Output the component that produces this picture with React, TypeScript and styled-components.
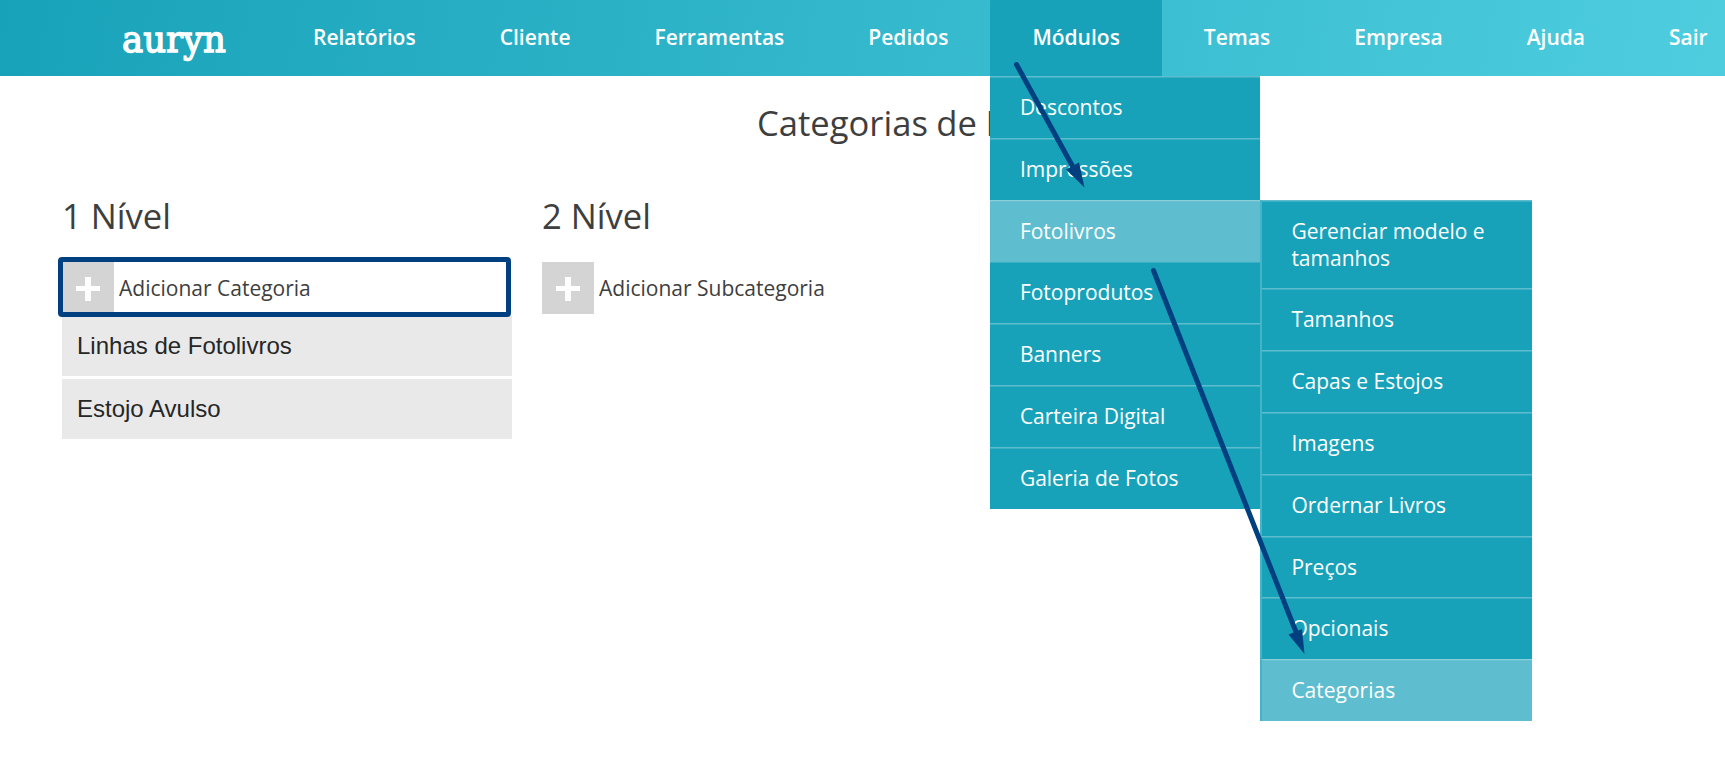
import React from "react";
import styled, { createGlobalStyle } from "styled-components";

const GlobalStyle = createGlobalStyle`
    body {
        margin: 0;
        background: #ffffff;
        color: #3e3e3e;
        font-family: "Open Sans", sans-serif;
        overflow: hidden;
    }
`;

const Page = styled.div`
    position: relative;
    width: 1725px;
    height: 771px;
    overflow: hidden;
`;

const Header = styled.header`
    display: flex;
    height: 76px;
    background: linear-gradient(100deg, #18a2b9 0%, #4ecddf 100%);
`;

const Logo = styled.svg`
    flex: none;
    width: 150px;
    height: 76px;
    margin-left: 121px;
    overflow: visible;
`;

const Nav = styled.nav`
    display: flex;
`;

const NavItem = styled.div<{ $active?: boolean }>`
    position: relative;
    box-sizing: border-box;
    height: 76px;
    padding: 0 42px;
    background: ${(props) => (props.$active ? "#18a2b9" : "transparent")};
`;

const NavLabel = styled.span`
    display: block;
    color: #ffffff;
    font-size: 21px;
    font-weight: 600;
    line-height: 75px;
    white-space: nowrap;
`;

const Menu = styled.div`
    position: absolute;
    z-index: 2;
    top: 76px;
    left: 0;
    width: 270px;
`;

const MenuItem = styled.div<{ $active?: boolean }>`
    position: relative;
    box-sizing: border-box;
    min-height: 61.8px;
    padding: 18px 29.5px 16px;
    background: ${(props) => (props.$active ? "#5ebdce" : "#18a2b9")};
    box-shadow: inset 0 1px ${(props) => (props.$active ? "#8bcfdb" : "#5dbdce")}, inset 0 2px ${(props) => (props.$active ? "#68c1d1" : "#3bb0c3")};
    color: #ffffff;
    font-size: 21px;
    line-height: 27.4px;
`;

const SubMenu = styled.div`
    position: absolute;
    top: 0;
    left: 270px;
    width: 270px;
    border-left: 2px solid #46b4c7;

    ${MenuItem} {
        padding-left: 29px;
    }
`;

const Content = styled.main`
    display: flex;
    flex-direction: column;
    padding: 0 62px;
`;

const Title = styled.h1`
    margin: 23px 0 0 695px;
    font-size: 34.6px;
    font-weight: 400;
    line-height: 48px;
    word-spacing: -0.5px;
    white-space: nowrap;
`;

const Columns = styled.div`
    display: flex;
    gap: 30px;
    margin-top: 45px;
`;

const Column = styled.section`
    width: 450px;
`;

const ColumnTitle = styled.h2`
    margin: 0 0 22px;
    font-size: 34.6px;
    font-weight: 400;
    line-height: 48px;
`;

const AddRow = styled.div`
    position: relative;
    display: flex;
    align-items: center;
    gap: 5px;
    height: 52px;
    margin-bottom: 2px;
    font-size: 21px;
`;

const AddButton = styled.div`
    display: flex;
    align-items: center;
    justify-content: center;
    box-sizing: border-box;
    width: 52px;
    height: 52px;
    padding-top: 2px;
    background: #d4d4d4;
`;

const Highlight = styled.div`
    position: absolute;
    z-index: 1;
    box-sizing: border-box;
    top: -5px;
    left: -4px;
    width: 453px;
    height: 60px;
    border: 5px solid #004080;
    border-radius: 4px;
`;

const Category = styled.div`
    height: 60px;
    margin-bottom: 3px;
    padding-left: 15px;
    background: #e9e9e9;
    color: #262626;
    font-family: "Liberation Sans", Arial, sans-serif;
    font-size: 24px;
    line-height: 60px;
`;

const Arrows = styled.svg`
    position: absolute;
    z-index: 3;
    top: 0;
    left: 0;
    width: 1725px;
    height: 771px;
    pointer-events: none;
`;

const navItems = ["Relatórios", "Cliente", "Ferramentas", "Pedidos", "Módulos", "Temas", "Empresa", "Ajuda", "Sair"];
const modules = ["Descontos", "Impressões", "Fotolivros", "Fotoprodutos", "Banners", "Carteira Digital", "Galeria de Fotos"];
const bookItems = ["Gerenciar modelo e tamanhos", "Tamanhos", "Capas e Estojos", "Imagens", "Ordernar Livros", "Preços", "Opcionais", "Categorias"];
const categories = ["Linhas de Fotolivros", "Estojo Avulso"];

const PlusIcon: React.FC = () => (
    <svg width="24" height="24" viewBox="0 0 24 24">
        <path d="M9 0h6v9h9v5h-9v10H9V14H0V9h9z" fill="#ffffff" />
    </svg>
);

function drawSubMenu() {
    return (
        <SubMenu>
            {bookItems.map((label) => (
                <MenuItem key={label} $active={label === "Categorias"}>{label}</MenuItem>
            ))}
        </SubMenu>
    );
}

function drawMenu() {
    return (
        <Menu>
            {modules.map((label) => (
                <MenuItem key={label} $active={label === "Fotolivros"}>
                    {label}
                    {label === "Fotolivros" && drawSubMenu()}
                </MenuItem>
            ))}
        </Menu>
    );
}

const App: React.FC = () => {
    return (
        <Page>
            <GlobalStyle />
            <Header>
                <Logo>
                    <text x="1" y="51.5" fill="#ffffff" stroke="#ffffff" strokeWidth="1.4" fontFamily="'DejaVu Serif', serif" fontSize="37.5" textLength="104" lengthAdjust="spacingAndGlyphs">auryn</text>
                </Logo>
                <Nav>
                    {navItems.map((label) => (
                        <NavItem key={label} $active={label === "Módulos"}>
                            <NavLabel>{label}</NavLabel>
                            {label === "Módulos" && drawMenu()}
                        </NavItem>
                    ))}
                </Nav>
            </Header>
            <Content>
                <Title>Categorias de Fotolivros</Title>
                <Columns>
                    <Column>
                        <ColumnTitle>1 Nível</ColumnTitle>
                        <AddRow>
                            <AddButton><PlusIcon /></AddButton>
                            Adicionar Categoria
                            <Highlight />
                        </AddRow>
                        {categories.map((label) => (
                            <Category key={label}>{label}</Category>
                        ))}
                    </Column>
                    <Column>
                        <ColumnTitle>2 Nível</ColumnTitle>
                        <AddRow>
                            <AddButton><PlusIcon /></AddButton>
                            Adicionar Subcategoria
                        </AddRow>
                    </Column>
                </Columns>
            </Content>
            <Arrows>
                <g stroke="#004080" strokeWidth="5" strokeLinecap="round">
                    <line x1="1016.5" y1="64.5" x2="1073" y2="167" />
                    <line x1="1153.5" y1="270.5" x2="1296" y2="632" />
                </g>
                <g fill="#004080">
                    <path d="M1084.5 187.5L1066 169.5L1079 162.5z" />
                    <path d="M1304.5 654L1288.5 634.5L1302 629z" />
                </g>
            </Arrows>
        </Page>
    );
};

export default App;
